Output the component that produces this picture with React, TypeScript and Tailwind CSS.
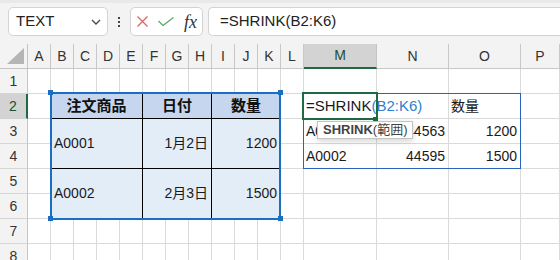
import React from "react";

const FONT = '"Liberation Sans", "Noto Sans CJK JP", sans-serif';
const COLS = ["A", "B", "C", "D", "E", "F", "G", "H", "I", "J", "K", "L", "M", "N", "O", "P"];

const cellBase = "border-r border-b border-[#dadada] flex items-center whitespace-nowrap text-[14px] text-[#1a1a1a] min-w-0";

function RowHead({ n, sel }: { n: number; sel?: boolean }) {
  return (
    <div
      className={
        sel
          ? "bg-[#d3d3d3] border-r-2 border-r-[#1e6b41] border-b border-b-[#d0d0d0] flex items-center justify-center text-[14px] text-[#1e4d32]"
          : "bg-[#f3f3f3] border-r border-b border-r-[#c4c4c4] border-b-[#d6d6d6] flex items-center justify-center text-[14px] text-[#333]"
      }
    >
      {n}
    </div>
  );
}

function E() {
  return <div className={cellBase} />;
}

function Row({ n, sel }: { n: number; sel?: boolean }) {
  return (
    <>
      <RowHead n={n} sel={sel} />
      {COLS.map((c) => (
        <E key={c} />
      ))}
    </>
  );
}

export default function App() {
  return (
    <div className="w-[560px] h-[260px] overflow-hidden bg-white" style={{ fontFamily: FONT }}>
      {/* Formula bar */}
      <div className="h-[44px] bg-[#f3f3f3] border-t-[3px] border-[#e9e9e9] flex items-start pt-[4px] pl-[8px]">
        <div className="w-[100px] h-[29px] rounded-[5px] border border-[#d3d3d3] bg-white flex items-center pl-[7px] pr-[6px] justify-between">
          <span className="text-[15px] text-[#222]">TEXT</span>
          <svg width="10" height="6" viewBox="0 0 10 6" fill="none">
            <path d="M1 1l4 4 4-4" stroke="#444" strokeWidth="1.3" />
          </svg>
        </div>
        <div className="w-[22px] h-[29px] flex flex-col items-center justify-center gap-[2px]">
          <div className="w-[2px] h-[2px] bg-[#444]" />
          <div className="w-[2px] h-[2px] bg-[#444]" />
          <div className="w-[2px] h-[2px] bg-[#444]" />
        </div>
        <div className="w-[73px] h-[29px] rounded-[5px] border border-[#d3d3d3] bg-white flex items-center pl-[6px] gap-[10px]">
          <svg width="11" height="11" viewBox="0 0 11 11" fill="none">
            <path d="M0.5 0.5l10 10M10.5 0.5l-10 10" stroke="#e0686a" strokeWidth="1.4" />
          </svg>
          <svg width="16" height="9" viewBox="0 0 16 9" fill="none">
            <path d="M0.5 4l4.5 4.5L15.5 0.5" stroke="#5fb169" strokeWidth="1.4" />
          </svg>
          <span className="text-[18px] italic text-[#333] leading-none" style={{ fontFamily: '"Liberation Serif", serif' }}>
            fx
          </span>
        </div>
        <div className="ml-[5px] flex-1 h-[29px] rounded-l-[5px] border border-r-0 border-[#d3d3d3] bg-white flex items-center pl-[11px]">
          <span className="text-[15px] text-[#222]">=SHRINK(B2:K6)</span>
        </div>
      </div>

      {/* Sheet */}
      <div className="relative grid grid-cols-[28px_repeat(12,23px)_73px_72px_72px_1fr] auto-rows-[25px]">
        {/* column header */}
        <div className="bg-[#f3f3f3] border-r border-b border-[#c4c4c4] relative">
          <svg className="absolute left-[7px] top-[4px]" width="17" height="16" viewBox="0 0 17 16">
            <path d="M17 0L17 16L0 16Z" fill="#b5b5b5" />
          </svg>
        </div>
        {COLS.map((c) =>
          c === "M" ? (
            <div
              key={c}
              className="bg-[#d3d3d3] border-r border-r-[#c4c4c4] border-b-2 border-b-[#1e6b41] flex items-center justify-center text-[14px] text-[#1e4d32]"
            >
              {c}
            </div>
          ) : (
            <div
              key={c}
              className="bg-[#f3f3f3] border-r border-b border-[#c8c8c8] flex items-center justify-center text-[14px] text-[#333]"
            >
              {c}
            </div>
          )
        )}

        {/* row 1 */}
        <Row n={1} />

        {/* row 2 */}
        <RowHead n={2} sel />
        <E />
        <div className="col-span-4 bg-[#c6d6ee] border-r border-b border-black flex items-center justify-center text-[15px] font-bold text-[#111]">
          注文商品
        </div>
        <div className="col-span-3 bg-[#c6d6ee] border-r border-b border-black flex items-center justify-center text-[15px] font-bold text-[#111]">
          日付
        </div>
        <div className="col-span-3 bg-[#c6d6ee] border-r border-b border-black flex items-center justify-center text-[15px] font-bold text-[#111]">
          数量
        </div>
        <E />
        <div className={cellBase + " pl-[2px] text-[15px] overflow-visible relative z-10"}>
          <span>=SHRINK</span>
          <span className="inline-block w-px h-[24px] bg-black" />
          <span className="text-[#2f7fd0]">(B2:K6)</span>
        </div>
        <E />
        <div className={cellBase + " pl-[2px]"}>数量</div>
        <E />

        {/* row 3 */}
        <RowHead n={3} />
        <E />
        <div className="col-span-4 row-span-2 bg-[#e3edf8] border-r border-b border-black flex items-center pl-[3px] text-[14px] text-[#1a1a1a]">
          A0001
        </div>
        <div className="col-span-3 row-span-2 bg-[#e3edf8] border-r border-b border-black flex items-center justify-end pr-[3px] text-[14px] text-[#1a1a1a]">
          1月2日
        </div>
        <div className="col-span-3 row-span-2 bg-[#e3edf8] border-r border-b border-black flex items-center justify-end pr-[3px] text-[14px] text-[#1a1a1a]">
          1200
        </div>
        <E />
        <div className={cellBase + " pl-[2px]"}>A0001</div>
        <div className={cellBase + " justify-end pr-[3px]"}>44563</div>
        <div className={cellBase + " justify-end pr-[3px]"}>1200</div>
        <E />

        {/* row 4 */}
        <RowHead n={4} />
        <E />
        <E />
        <div className={cellBase + " pl-[2px]"}>A0002</div>
        <div className={cellBase + " justify-end pr-[3px]"}>44595</div>
        <div className={cellBase + " justify-end pr-[3px]"}>1500</div>
        <E />

        {/* row 5 */}
        <RowHead n={5} />
        <E />
        <div className="col-span-4 row-span-2 bg-[#e3edf8] border-r border-b border-black flex items-center pl-[3px] text-[14px] text-[#1a1a1a]">
          A0002
        </div>
        <div className="col-span-3 row-span-2 bg-[#e3edf8] border-r border-b border-black flex items-center justify-end pr-[3px] text-[14px] text-[#1a1a1a]">
          2月3日
        </div>
        <div className="col-span-3 row-span-2 bg-[#e3edf8] border-r border-b border-black flex items-center justify-end pr-[3px] text-[14px] text-[#1a1a1a]">
          1500
        </div>
        <E />
        <E />
        <E />
        <E />
        <E />

        {/* row 6 */}
        <RowHead n={6} />
        <E />
        <E />
        <E />
        <E />
        <E />
        <E />

        <Row n={7} />
        <Row n={8} />

        {/* overlays */}
        <div className="absolute left-[50px] top-[48px] w-[231px] h-[128px] border-2 border-[#1b6ec2] pointer-events-none" />
        <div className="absolute left-[48px] top-[46px] w-[5px] h-[5px] bg-[#1b6ec2]" />
        <div className="absolute left-[278px] top-[46px] w-[5px] h-[5px] bg-[#1b6ec2]" />
        <div className="absolute left-[48px] top-[172px] w-[5px] h-[5px] bg-[#1b6ec2]" />
        <div className="absolute left-[278px] top-[172px] w-[5px] h-[5px] bg-[#1b6ec2]" />

        <div className="absolute left-[303px] top-[49px] w-[218px] h-[76px] border border-[#2b62bb] pointer-events-none" />
        <div className="absolute left-[302px] top-[48px] w-[76px] h-[28px] border-2 border-[#1e6b41] pointer-events-none z-20" />
        <div className="absolute left-[373px] top-[73px] w-[5px] h-[4px] bg-[#1e6b41] z-20" />

        <div className="absolute left-[317px] top-[77px] w-[96px] h-[18px] bg-white border border-[#c3c3c3] shadow-[0_2px_6px_rgba(0,0,0,0.18)] flex items-center pl-[5px] text-[13px] text-[#444] whitespace-nowrap z-30">
          <span className="font-bold">SHRINK</span>
          <span>(範囲)</span>
        </div>
      </div>
    </div>
  );
}
